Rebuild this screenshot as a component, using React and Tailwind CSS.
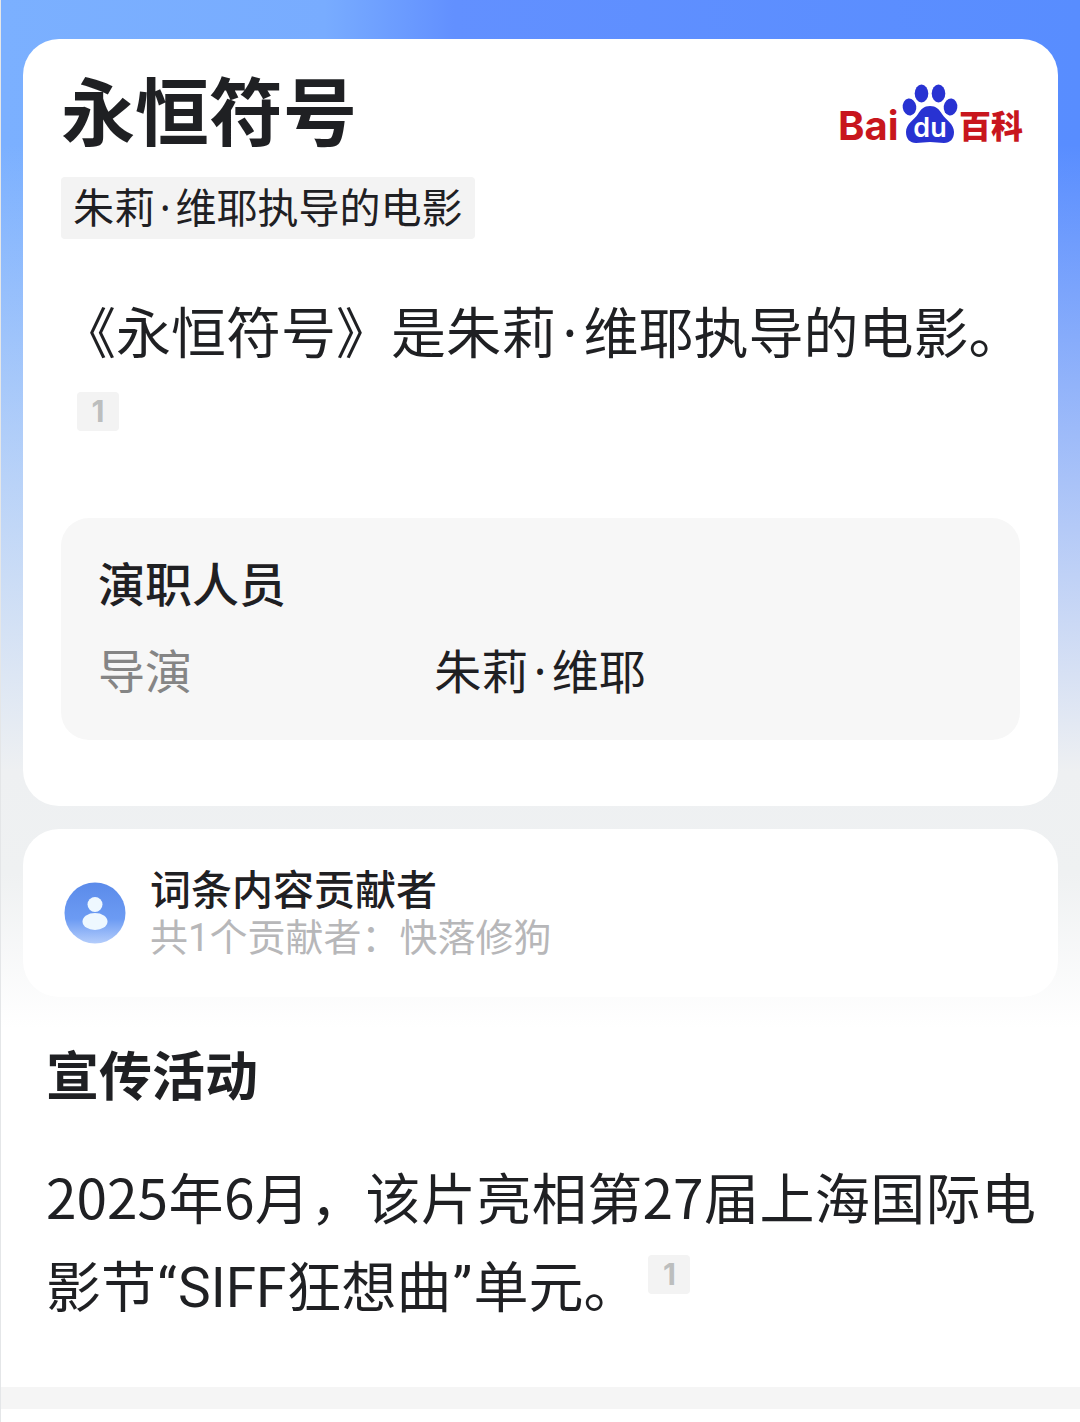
import React from 'react';

const entry = {
  title: '永恒符号',
  crew: [{ role: '导演', name: ['朱莉', '维耶'] }],
  contributors: ['快落修狗'],
};

function BaikeLogo() {
  return (
    <svg viewBox="-4 0 192 68" className="w-[192px] h-[68px] shrink-0" role="img" aria-label="Baidu百科">
      <text x="-2" y="56" fontSize="40" fontWeight="700" fill="#c8161d" fontFamily="Inter, sans-serif">Bai</text>
      <g fill="#2832d2">
        <ellipse cx="69.5" cy="23" rx="6.8" ry="8.5" transform="rotate(-8 69.5 23)" />
        <ellipse cx="81.5" cy="9.5" rx="6.8" ry="9" />
        <ellipse cx="98.5" cy="9.5" rx="6.8" ry="9" />
        <ellipse cx="110.5" cy="23" rx="6.8" ry="8.5" transform="rotate(8 110.5 23)" />
        <path d="M90 22c-6 0-9 3-12 8-4 6-12 10-12 18 0 7 4 11 10 11 5 0 9-1 14-1s9 1 14 1c6 0 10-4 10-11 0-8-8-12-12-18-3-5-6-8-12-8z" />
      </g>
      <text x="90" y="53" fontSize="27" fontWeight="600" fill="#fff" textAnchor="middle" fontFamily="Inter, sans-serif">du</text>
      <text x="119" y="54" fontSize="32" fontWeight="900" fill="#c8161d" fontFamily="Noto Sans CJK SC, sans-serif">百科</text>
    </svg>
  );
}

function ContributorIcon() {
  return (
    <svg viewBox="0 0 62 62" className="size-[62px] shrink-0" aria-hidden="true">
      <defs>
        <linearGradient id="avatar" x1="0" y1="0" x2="0" y2="1">
          <stop offset="0" stopColor="#5b8bea" />
          <stop offset="0.6" stopColor="#6c9bf3" />
          <stop offset="1" stopColor="#b4cdfb" />
        </linearGradient>
      </defs>
      <circle cx="31" cy="31" r="30.5" fill="url(#avatar)" />
      <circle cx="31" cy="22.5" r="7.5" fill="#eef8ff" />
      <ellipse cx="31" cy="39.5" rx="12.5" ry="8.5" fill="#eef8ff" />
    </svg>
  );
}

// half-width separator between the parts of a foreign name
function Dot() {
  return <span className="inline-block w-[0.5em] text-center font-['Noto_Sans',sans-serif] leading-none">·</span>;
}

function Quote({ children }) {
  return <span className="inline-block w-[0.4em] text-center font-['Roboto',sans-serif] leading-none">{children}</span>;
}

function Cite({ className, children }) {
  return (
    <a
      href="#refs"
      className={`inline-flex items-center justify-center w-[42px] h-[39px] rounded-sm bg-[#f3f3f3] font-['Inter',sans-serif] text-[30px] leading-none font-bold text-[#bcbebe] ${className}`}
    >
      {children}
    </a>
  );
}

export default function App() {
  return (
    <div className="bg-white text-[#1f2023] font-['Noto_Sans_CJK_SC',sans-serif] border-l border-[#e4e6e8]" lang="zh-CN">
      <div className="bg-[linear-gradient(to_right,#7bb0ff_0%,#78acff_30%,#6290ff_42%,#588dff_100%)]">
        <div className="bg-[linear-gradient(to_bottom,#eef1f300_14%,#eef0f2_75%,#eff1f2_85%,#ffffff_100%)] px-[22px] pt-[39px] pb-[31px] flex flex-col gap-[23px]">
          <section className="bg-white rounded-[36px] px-[38px] pt-[25px] pb-[66px]">
            <div className="flex items-start justify-between">
              <h1 className="text-[74px] leading-[88px] font-bold">{entry.title}</h1>
              <a href="#home" className="mt-5 -mr-2">
                <BaikeLogo />
              </a>
            </div>
            <p className="w-fit mt-[25px] px-3 pb-[6px] bg-[#f3f3f3] rounded-sm text-[41px] leading-[56px]">
              朱莉<Dot />维耶执导的电影
            </p>
            <p className="-mr-4 mt-[51px] text-[55px] leading-[78px]">
              《永恒符号》是朱莉<Dot />维耶执导的电影。
              <Cite className="ml-4 align-[9px]">1</Cite>
            </p>
            <div className="mt-[72px] bg-[#f7f7f7] rounded-[28px] px-[37px] pt-5 pb-7 text-[47px] leading-[87px]">
              <h2 className="font-medium">演职人员</h2>
              <dl>
                {entry.crew.map((c) => (
                  <div key={c.role} className="flex">
                    <dt className="w-[38%] text-[#858585]">{c.role}</dt>
                    <dd>{c.name[0]}<Dot />{c.name[1]}</dd>
                  </div>
                ))}
              </dl>
            </div>
          </section>

          <section className="bg-white rounded-[36px] px-[41px] py-[35px] flex items-center gap-6">
            <ContributorIcon />
            <div className="pb-1">
              <h2 className="text-[41px] leading-[47px] font-medium">词条内容贡献者</h2>
              <p className="text-[38px] leading-[47px] text-[#b7b7b9]">
                共<span className="font-['Roboto',sans-serif] leading-none">{entry.contributors.length}</span>个贡献者：{entry.contributors.join('、')}
              </p>
            </div>
          </section>
        </div>
      </div>

      <section className="pl-[45px] pr-[44px] pt-[13px] pb-[60px]">
        <h2 className="text-[53px] leading-[64px] font-bold">宣传活动</h2>
        <p className="mt-[46px] text-[55px] leading-[88px] text-justify">
          2025年6月，该片亮相第27届上海国际电影节<Quote>“</Quote>
          <span className="font-['Roboto',sans-serif] leading-none">SIFF</span>狂想曲<Quote>”</Quote>单元。
          <Cite className="ml-[10px] align-[22px]">1</Cite>
        </p>
      </section>
      <div className="h-[22px] bg-[#f5f5f5]" />
      <div className="h-[13px]" />
    </div>
  );
}
